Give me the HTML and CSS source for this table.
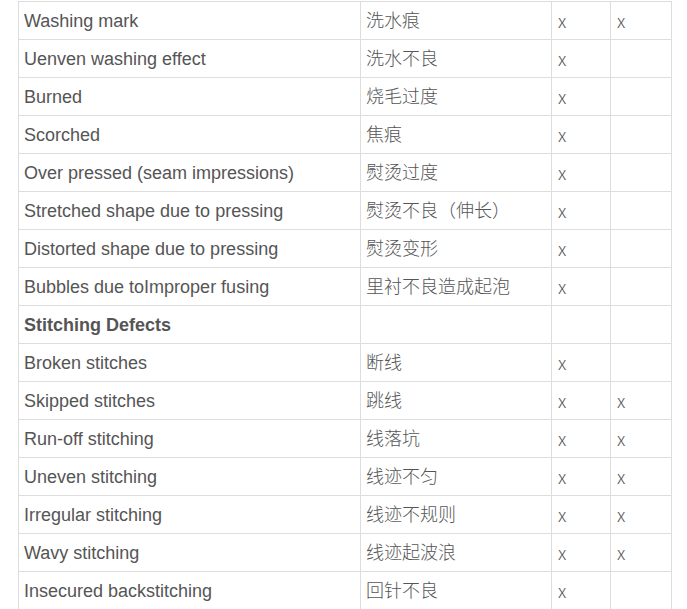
FILE: index.html
```html
<!DOCTYPE html>
<html>
<head>
<meta charset="utf-8">
<link rel="stylesheet" href="styles.css">
</head>
<body>
<table class="defects">
  <colgroup>
    <col class="c-en"><col class="c-zh"><col class="c-a"><col class="c-b">
  </colgroup>
  <tbody>
    <tr><td>Washing mark</td><td class="zh">洗水痕</td><td class="mk">x</td><td class="mk">x</td></tr>
    <tr><td>Uenven washing effect</td><td class="zh">洗水不良</td><td class="mk">x</td><td></td></tr>
    <tr><td>Burned</td><td class="zh">烧毛过度</td><td class="mk">x</td><td></td></tr>
    <tr><td>Scorched</td><td class="zh">焦痕</td><td class="mk">x</td><td></td></tr>
    <tr><td>Over pressed (seam impressions)</td><td class="zh">熨烫过度</td><td class="mk">x</td><td></td></tr>
    <tr><td>Stretched shape due to pressing</td><td class="zh">熨烫不良（伸长）</td><td class="mk">x</td><td></td></tr>
    <tr><td>Distorted shape due to pressing</td><td class="zh">熨烫变形</td><td class="mk">x</td><td></td></tr>
    <tr><td>Bubbles due toImproper fusing</td><td class="zh">里衬不良造成起泡</td><td class="mk">x</td><td></td></tr>
    <tr><td class="head">Stitching Defects</td><td></td><td></td><td></td></tr>
    <tr><td>Broken stitches</td><td class="zh">断线</td><td class="mk">x</td><td></td></tr>
    <tr><td>Skipped stitches</td><td class="zh">跳线</td><td class="mk">x</td><td class="mk">x</td></tr>
    <tr><td>Run-off stitching</td><td class="zh">线落坑</td><td class="mk">x</td><td class="mk">x</td></tr>
    <tr><td>Uneven stitching</td><td class="zh">线迹不匀</td><td class="mk">x</td><td class="mk">x</td></tr>
    <tr><td>Irregular stitching</td><td class="zh">线迹不规则</td><td class="mk">x</td><td class="mk">x</td></tr>
    <tr><td>Wavy stitching</td><td class="zh">线迹起波浪</td><td class="mk">x</td><td class="mk">x</td></tr>
    <tr><td>Insecured backstitching</td><td class="zh">回针不良</td><td class="mk">x</td><td></td></tr>
  </tbody>
</table>
</body>
</html>
```
FILE: styles.css
```css
html, body {
  margin: 0;
  padding: 0;
  background: #ffffff;
}
body {
  padding: 1px 0 0 18px;
  font-family: "Liberation Sans", Arial, "Noto Sans CJK SC", sans-serif;
  font-size: 18px;
  color: #555555;
}
.defects {
  border-collapse: collapse;
  table-layout: fixed;
  width: 653px;
}
.c-en { width: 342px; }
.c-zh { width: 191px; }
.c-a { width: 59px; }
.c-b { width: 61px; }
.defects td {
  border: 1px solid #dddddd;
  height: 38px;
  padding: 0 0 0 5px;
  box-sizing: border-box;
  vertical-align: middle;
  line-height: 22px;
  white-space: nowrap;
}
.defects td.zh {
  font-family: "Noto Sans CJK SC", sans-serif;
  font-size: 18px;
  font-weight: 300;
  padding-bottom: 4px;
}
.defects td.mk {
  font-family: "Noto Sans CJK SC", sans-serif;
  font-weight: 300;
  padding-left: 6px;
  padding-bottom: 2px;
}
.defects td.head {
  font-weight: bold;
}
```
